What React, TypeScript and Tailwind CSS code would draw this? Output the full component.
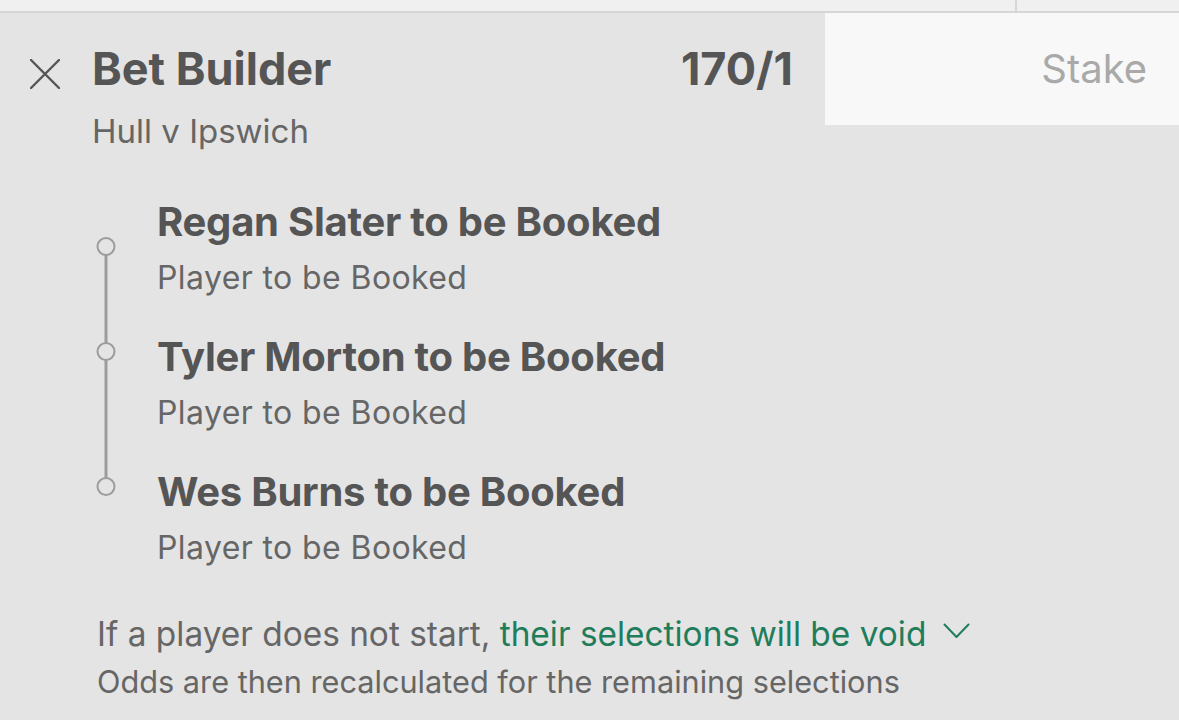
import React from "react";

const selections = [
  { title: "Regan Slater to be Booked", market: "Player to be Booked" },
  { title: "Tyler Morton to be Booked", market: "Player to be Booked" },
  { title: "Wes Burns to be Booked", market: "Player to be Booked" },
];

function CloseIcon() {
  return (
    <svg width="30" height="30" viewBox="0 0 30 30" fill="none">
      <path d="M1 1 L29 29 M29 1 L1 29" stroke="#555" strokeWidth="2.4" strokeLinecap="round" />
    </svg>
  );
}

// vertical connector with a ring per leg
function Timeline() {
  return (
    <svg width="22" height="300" viewBox="0 0 22 300" fill="none">
      <line x1="11" y1="57" x2="11" y2="280" stroke="#9c9c9c" strokeWidth="3" />
      {[48.5, 153.5, 288.5].map((cy) => (
        <circle key={cy} cx="11" cy={cy} r="8.5" fill="#e4e4e4" stroke="#9c9c9c" strokeWidth="2" />
      ))}
    </svg>
  );
}

function Chevron() {
  return (
    <svg width="27" height="16" viewBox="0 0 27 16" fill="none">
      <path d="M1.5 1.5 L13.5 14 L25.5 1.5" stroke="#1f7d5c" strokeWidth="2" strokeLinecap="round" strokeLinejoin="round" />
    </svg>
  );
}

export default function App() {
  return (
    <div
      className="w-[1179px] h-[720px] overflow-hidden bg-[#e4e4e4] text-[#555]"
      style={{ fontFamily: "Inter, 'Noto Sans', sans-serif" }}
    >
      {/* top strip */}
      <div className="flex h-[13px] bg-[#f0f0f0] border-b-2 border-[#d6d6d6]">
        <div className="w-[1015px]" />
        <div className="w-[2px] bg-[#d6d6d6]" />
      </div>

      {/* header */}
      <div className="flex items-start">
        <div className="flex flex-1 items-start">
          <div className="w-[92px] pl-[30px] pt-[46px]">
            <CloseIcon />
          </div>
          <div className="flex-1 pt-[29px]">
            <div className="text-[45px] leading-[54px] font-bold">Bet Builder</div>
            <div className="mt-[15px] text-[33px] leading-[40px] text-[#666]">Hull v Ipswich</div>
          </div>
          <div className="pt-[29px] pr-[32px] text-[45px] leading-[54px] font-bold">170/1</div>
        </div>
        <div className="flex h-[112px] w-[354px] items-center justify-end bg-[#f8f8f8] pr-[32px]">
          <span className="text-[40px] leading-[46px] text-[#a9a9a9]">Stake</span>
        </div>
      </div>

      {/* legs */}
      <div className="mt-[-138px] pt-[185px] flex items-start">
        <div className="ml-[95px]">
          <Timeline />
        </div>
        <div className="ml-[40px] flex flex-col">
          {selections.map((s) => (
            <div key={s.title} className="h-[135px]">
              <div className="text-[40px] leading-[48px] font-bold tracking-[-0.25px]">{s.title}</div>
              <div className="mt-[12px] text-[32px] leading-[40px] tracking-[0.4px] text-[#666]">{s.market}</div>
            </div>
          ))}
        </div>
      </div>

      {/* void rule */}
      <div className="pl-[97px] pt-[7px] text-[#666]">
        <div className="flex items-center text-[33.4px] leading-[48px]">
          <span>
            If a player does not start, <span className="text-[#1f7d5c]">their selections will be void</span>
          </span>
          <span className="ml-[17px] mb-[6px]">
            <Chevron />
          </span>
        </div>
        <div className="text-[30.7px] leading-[47px]">Odds are then recalculated for the remaining selections</div>
      </div>
    </div>
  );
}
